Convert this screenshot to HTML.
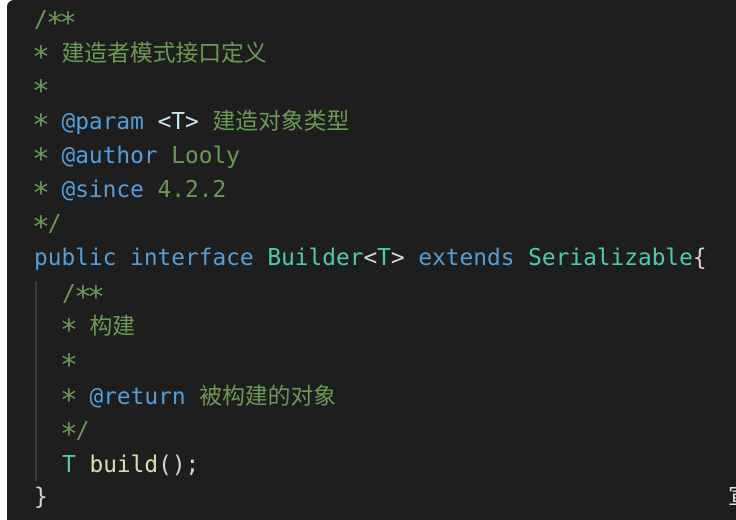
<!DOCTYPE html>
<html><head><meta charset="utf-8"><style>
html,body{margin:0;padding:0;background:#fff;width:736px;height:514px;overflow:hidden}
.p{position:absolute;left:7px;top:0;width:740px;height:520px;background:#1e1e1e;border-top-left-radius:7px}
.l{position:absolute;left:34px;white-space:pre;font-family:"DejaVu Sans Mono","Noto Sans CJK SC",monospace;font-size:22.8px;line-height:30px;color:#d4d4d4}
.c{color:#6a9955}.k{color:#569cd6}.t{color:#4ec9b0}.f{color:#dcdcaa}.v{color:#c8e4f4}
.a{display:inline-block;transform:translateY(4px) scale(1.3)}
.g{position:absolute;left:35px;top:281px;width:2px;height:200px;background:#3a3a3a}
</style></head><body>
<div class="p"></div>
<div class="g"></div>
<div class="l c" style="top:5px">/<span class="a">*</span><span class="a">*</span></div>
<div class="l c" style="top:39px"><span class="a">*</span> 建造者模式接口定义</div>
<div class="l c" style="top:73px"><span class="a">*</span></div>
<div class="l c" style="top:107px"><span class="a">*</span> <span class="k">@param</span> <span class="v">&lt;T&gt;</span> 建造对象类型</div>
<div class="l c" style="top:141px"><span class="a">*</span> <span class="k">@author</span> Looly</div>
<div class="l c" style="top:175px"><span class="a">*</span> <span class="k">@since</span> 4.2.2</div>
<div class="l c" style="top:209px"><span class="a">*</span>/</div>
<div class="l" style="top:243px"><span class="k">public</span> <span class="k">interface</span> <span class="t">Builder</span>&lt;<span class="t">T</span>&gt; <span class="k">extends</span> <span class="t">Serializable</span>{</div>
<div class="l c" style="top:279px;left:62px">/<span class="a">*</span><span class="a">*</span></div>
<div class="l c" style="top:312px;left:62px"><span class="a">*</span> 构建</div>
<div class="l c" style="top:347px;left:62px"><span class="a">*</span></div>
<div class="l c" style="top:382px;left:62px"><span class="a">*</span> <span class="k">@return</span> 被构建的对象</div>
<div class="l c" style="top:416px;left:62px"><span class="a">*</span>/</div>
<div class="l" style="top:450px;left:62px"><span class="t">T</span> <span class="f">build</span>();</div>
<div class="l" style="top:482px">}</div>
<div class="l" style="top:482px;left:728px;color:#ddd">宣</div>
</body></html>
